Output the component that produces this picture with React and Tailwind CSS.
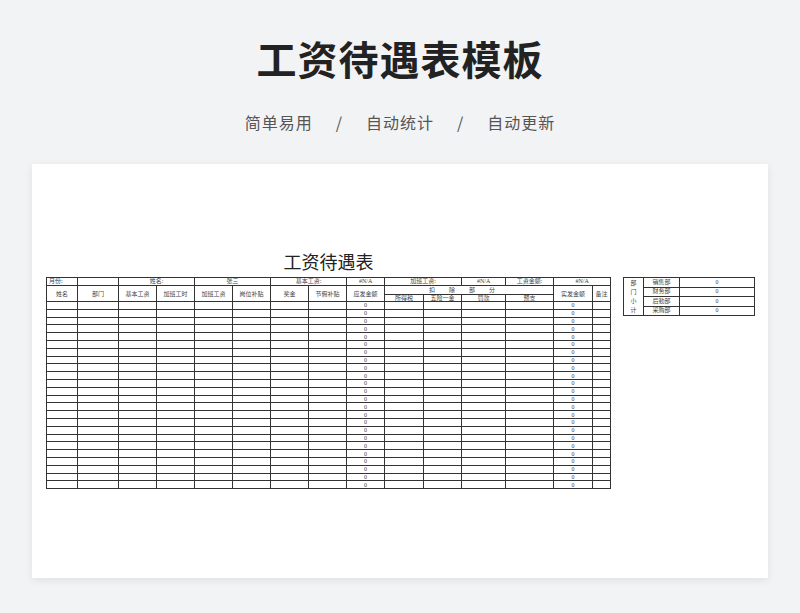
const W=[31,41,38,38,38,38,38,38,38,39,38,44,48,39,18];
const b="border border-[#333]";
const serif={fontFamily:'"Liberation Serif","Noto Sans CJK SC",serif'};
export default function App(){
  const rows=Array.from({length:24});
  return(
  <div className="w-[800px] h-[613px] bg-[#f2f3f5] flex flex-col items-center" style={{fontFamily:'"Noto Sans CJK SC",sans-serif'}}>
    <div className="mt-[30px] text-[40px] leading-[56px] font-bold text-[#222] tracking-[1px]">工资待遇表模板</div>
    <div className="mt-[24px] text-[16px] leading-[24px] text-[#555] flex gap-[23px] tracking-[1px]">
      <span>简单易用</span><span>/</span><span>自动统计</span><span>/</span><span>自动更新</span>
    </div>
    <div className="mt-[30px] w-[736px] h-[414px] bg-white shadow-[0_2px_8px_rgba(0,0,0,0.08)] flex pl-[14px] pt-[85px] gap-[12px]" style={serif}>
      <div className="flex flex-col">
        <div className="text-[18px] leading-[28px] text-center text-[#222]">工资待遇表</div>
        <table className="table-fixed border-collapse text-[6px] text-[#444] text-center" style={{width:564}}>
          <colgroup>{W.map((w,i)=><col key={i} style={{width:w}}/>)}</colgroup>
          <tbody>
            <tr className="h-[8px] leading-[7px]">
              <td className={b+" text-left pl-[2px]"}>月份:</td><td className={b}></td>
              <td colSpan={2} className={b}>姓名:</td><td colSpan={2} className={b}>张三</td>
              <td colSpan={2} className={b}>基本工资:</td><td className={b}>#N/A</td>
              <td colSpan={2} className={b}>加班工资:</td><td className={b}>#N/A</td>
              <td className={b}>工资金额:</td><td colSpan={2} className={b}>#N/A</td>
            </tr>
            <tr className="h-[9px] leading-[8px]">
              {["姓名","部门","基本工资","加班工时","加班工资","岗位补贴","奖金","节假补贴","应发金额"].map(t=><td key={t} rowSpan={2} className={b}>{t}</td>)}
              <td colSpan={4} className={b+" tracking-[14px]"}>扣除部分</td>
              <td rowSpan={2} className={b}>实发金额</td><td rowSpan={2} className={b}>备注</td>
            </tr>
            <tr className="h-[7px] leading-[6px]">
              {["所得税","五险一金","罚款","预支"].map(t=><td key={t} className={b}>{t}</td>)}
            </tr>
            {rows.map((_,r)=><tr key={r} className="h-[7.8px] leading-[6px]">
              {W.map((_,i)=><td key={i} className={b}>{i===8||i===13?"0":""}</td>)}
            </tr>)}
          </tbody>
        </table>
      </div>
      <table className="table-fixed border-collapse text-[6px] text-[#444] text-center mt-[28px] self-start" style={{width:131}}>
        <colgroup><col style={{width:20}}/><col style={{width:36}}/><col style={{width:75}}/></colgroup>
        <tbody>
          {["销售部","财务部","后勤部","采购部"].map((t,i)=><tr key={t} className="h-[9.5px] leading-[7px]">
            {i===0&&<td rowSpan={4} className={b+" leading-[9px]"}>部<br/>门<br/>小<br/>计</td>}
            <td className={b}>{t}</td><td className={b}>0</td>
          </tr>)}
        </tbody>
      </table>
    </div>
  </div>);
}
